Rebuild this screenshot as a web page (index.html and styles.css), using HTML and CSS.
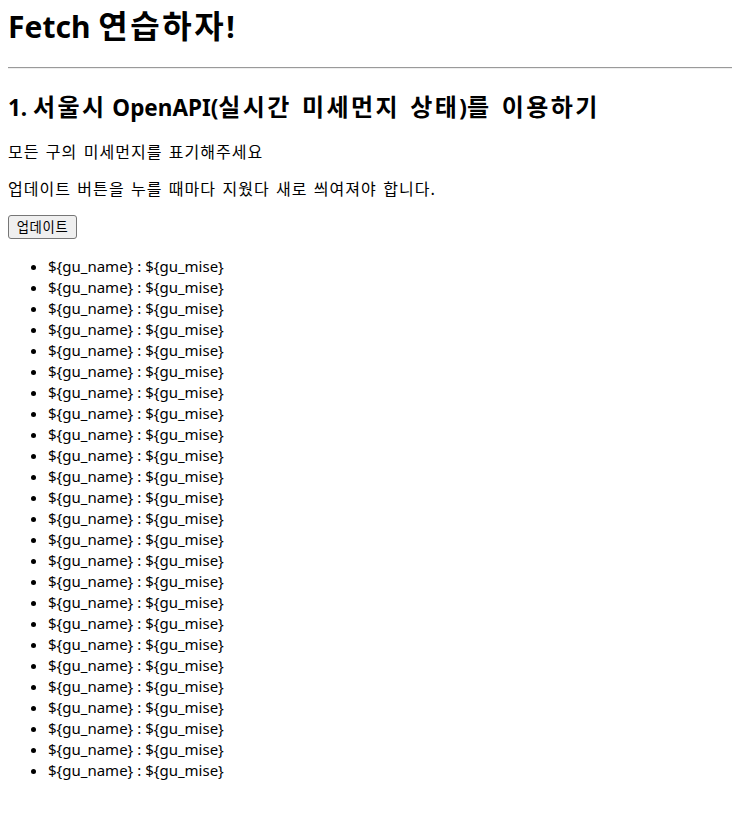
FILE: index.html
```html
<!DOCTYPE html>
<html lang="ko">
<head>
<meta charset="utf-8">
<title>Fetch 연습하자!</title>
<link rel="stylesheet" href="styles.css">
</head>
<body class="page">
<h1 class="title">Fetch <span class="ko">연습하자</span>!</h1>
<hr class="divider">
<h2 class="subtitle">1. <span class="ko">서울시</span> OpenAPI(<span class="ko">실시간 미세먼지 상태</span>)<span class="ko">를 이용하기</span></h2>
<p class="text ko">모든 구의 미세먼지를 표기해주세요</p>
<p class="text ko">업데이트 버튼을 누를 때마다 지웠다 새로 씌여져야 합니다.</p>
<div class="actions"><button class="btn" type="button">업데이트</button></div>
<ul class="list">
<li>${gu_name} : ${gu_mise}</li>
<li>${gu_name} : ${gu_mise}</li>
<li>${gu_name} : ${gu_mise}</li>
<li>${gu_name} : ${gu_mise}</li>
<li>${gu_name} : ${gu_mise}</li>
<li>${gu_name} : ${gu_mise}</li>
<li>${gu_name} : ${gu_mise}</li>
<li>${gu_name} : ${gu_mise}</li>
<li>${gu_name} : ${gu_mise}</li>
<li>${gu_name} : ${gu_mise}</li>
<li>${gu_name} : ${gu_mise}</li>
<li>${gu_name} : ${gu_mise}</li>
<li>${gu_name} : ${gu_mise}</li>
<li>${gu_name} : ${gu_mise}</li>
<li>${gu_name} : ${gu_mise}</li>
<li>${gu_name} : ${gu_mise}</li>
<li>${gu_name} : ${gu_mise}</li>
<li>${gu_name} : ${gu_mise}</li>
<li>${gu_name} : ${gu_mise}</li>
<li>${gu_name} : ${gu_mise}</li>
<li>${gu_name} : ${gu_mise}</li>
<li>${gu_name} : ${gu_mise}</li>
<li>${gu_name} : ${gu_mise}</li>
<li>${gu_name} : ${gu_mise}</li>
<li>${gu_name} : ${gu_mise}</li>
</ul>
</body>
</html>
```
FILE: styles.css
```css
html, body { background: #fff; }
.page {
  margin: 8px;
  font-family: "Noto Sans", "Noto Sans CJK KR", sans-serif;
  font-size: 15px;
  color: #000;
}
.ko {
  font-family: "Noto Sans CJK KR", sans-serif;
  font-size: 1.0667em;
  line-height: 1;
  letter-spacing: 0.08em;
  word-spacing: 0.05em;
}
.title {
  margin: 0;
  font-size: 30px;
  line-height: 30px;
  font-weight: 700;
}
.divider {
  margin: 25px 0 8px 0;
  width: calc(100% + 8px);
  border: 0;
  border-top: 1px solid #9a9a9a;
  border-bottom: 1px solid #eeeeee;
  height: 0;
}
.subtitle {
  margin: 23px 0 17px;
  font-size: 22.5px;
  line-height: 32px;
  font-weight: 700;
}
.subtitle .ko {
  letter-spacing: 0.1em;
}
.text {
  margin: 16px 0;
  line-height: 21px;
}
.text.ko {
  font-size: 16px;
  line-height: 21px;
  letter-spacing: 0.065em;
}
.actions {
  margin: 0;
  line-height: 24px;
  height: 24px;
}
.btn {
  font-family: "Noto Sans CJK KR", sans-serif;
  font-size: 13.33px;
  line-height: 17px;
  letter-spacing: 0.05em;
  padding: 1px 4px 2px;
  height: 24px;
  width: 69px;
  background: #efefef;
  border: 1px solid #767676;
  border-radius: 3px;
  color: #000;
  margin: 0;
  vertical-align: top;
}
.list {
  margin: 17px 0 16px;
  padding-left: 40px;
}
.list li {
  line-height: 21px;
}
```
